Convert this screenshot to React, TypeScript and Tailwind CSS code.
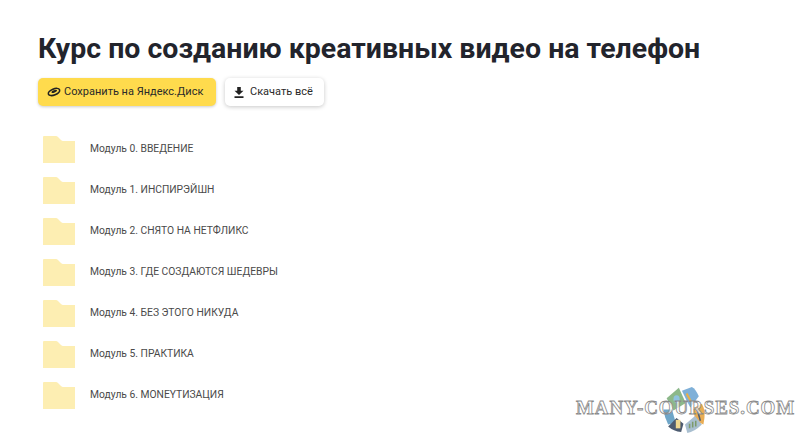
const rows = [
  "Модуль 0. ВВЕДЕНИЕ",
  "Модуль 1. ИНСПИРЭЙШН",
  "Модуль 2. СНЯТО НА НЕТФЛИКС",
  "Модуль 3. ГДЕ СОЗДАЮТСЯ ШЕДЕВРЫ",
  "Модуль 4. БЕЗ ЭТОГО НИКУДА",
  "Модуль 5. ПРАКТИКА",
  "Модуль 6. MONEYТИЗАЦИЯ",
];

function Folder() {
  return (
    <svg width="32" height="27" viewBox="0 0 32 27" className="shrink-0">
      <path d="M0 1 Q0 0 1 0 H13 Q14 0 15 1 L18 4 Q19 5 20 5 H32 V27 H0 Z" fill="#fdeeb2" />
    </svg>
  );
}

function Globe() {
  return (
    <svg width="46" height="49" viewBox="0 0 60 52" preserveAspectRatio="none" className="absolute left-[102px] top-[10px]">
      <path d="M6 14 L22 3 L31 19 L15 27 Z" fill="#8cb88a" />
      <circle cx="19" cy="15" r="4" fill="#8fc3e0" />
      <path d="M26 6 L39 2 Q44 4 48 12 L37 24 L33 18 Z" fill="#7fb0d8" />
      <path d="M32 9 L38 18" stroke="#e8b04a" strokeWidth="2.5" />
      <path d="M2 26 L13 26 L18 40 L8 42 Q3 34 2 26 Z" fill="#6fa6c8" />
      <path d="M40 25 L52 20 Q58 28 54 42 L44 38 Z" fill="#e9ad55" />
      <path d="M46 26 L50 38" stroke="#4a5a70" strokeWidth="2" />
      <path d="M8 44 L19 35 L28 41 L25 50 Q15 49 8 44 Z" fill="#4d5b70" />
      <rect x="18" y="37" width="6" height="9" fill="#f0d890" />
      <path d="M30 42 L43 33 L52 42 Q42 50 33 51 Z" fill="#a9bfd0" />
      <path d="M36 46 L36 41 M40 45 L40 39 M44 44 L44 38" stroke="#7c9a6a" strokeWidth="2" />
    </svg>
  );
}

export default function App() {
  return (
    <div className="relative w-[800px] h-[442px] overflow-hidden bg-white font-['Roboto','Noto_Sans',sans-serif]">
      <div className="pl-[38px] pt-[30px]">
        <h1 className="text-[28.5px] leading-[38px] font-bold text-[#22242c] whitespace-nowrap">
          Курс по созданию креативных видео на телефон
        </h1>
        <div className="flex gap-[9px] mt-[10px]">
          <div className="flex items-center w-[178px] h-[28px] rounded-[5px] bg-[#ffdb4d] shadow-[0_1px_3px_rgba(0,0,0,0.2)] pl-[9px] gap-[3px]">
            <svg width="14" height="10" viewBox="0 0 14 10">
              <ellipse cx="7" cy="5" rx="6" ry="3" fill="none" stroke="#222" strokeWidth="1.6" transform="rotate(-22 7 5)" />
              <ellipse cx="7.5" cy="4.5" rx="3" ry="1.2" fill="#222" transform="rotate(-22 7 5)" />
            </svg>
            <span className="text-[11px] text-[#2a2a2a] whitespace-nowrap">Сохранить на Яндекс.Диск</span>
          </div>
          <div className="flex items-center w-[99px] h-[28px] rounded-[5px] bg-white shadow-[0_1px_4px_rgba(0,0,0,0.22)] pl-[9px] gap-[6px]">
            <svg width="10" height="11" viewBox="0 0 10 11">
              <path d="M3.2 0 H6.8 V3.8 H9.5 L5 8 L0.5 3.8 H3.2 Z M0.5 9.3 H9.5 V11 H0.5 Z" fill="#222" />
            </svg>
            <span className="text-[11px] text-[#2a2a2a] whitespace-nowrap">Скачать всё</span>
          </div>
        </div>
        <div className="flex flex-col gap-[14px] mt-[30px] pl-[5px]">
          {rows.map((r) => (
            <div key={r} className="flex items-center gap-[15px] h-[27px]">
              <Folder />
              <span className="text-[10.3px] text-[#4a4a4a] whitespace-nowrap pb-[2px]">{r}</span>
            </div>
          ))}
        </div>
      </div>
      <div className="absolute left-[560px] top-[375px] w-[240px] h-[67px]">
        <Globe />
        <div
          className="absolute left-[16px] top-[21px] text-[19px] leading-[24px] tracking-[0.9px] font-bold text-white/70 whitespace-nowrap font-['Liberation_Serif',serif] [-webkit-text-stroke:0.8px_#8a8a8a]"
        >
          MANY-COURSES.COM
        </div>
      </div>
    </div>
  );
}
